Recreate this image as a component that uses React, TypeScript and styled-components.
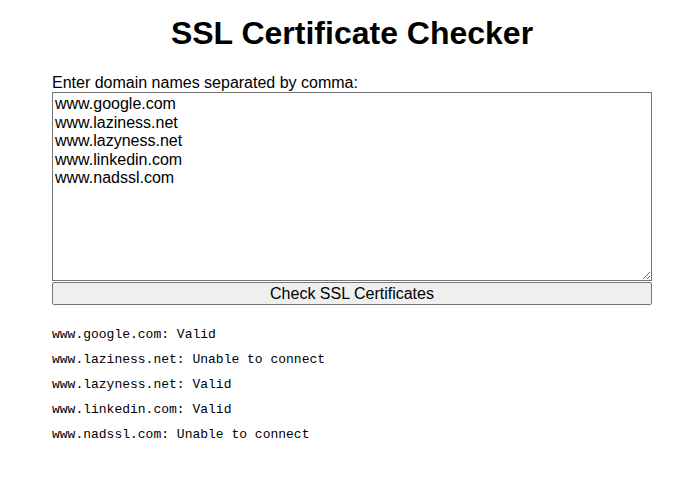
import React, {useState} from "react";
import styled, {createGlobalStyle} from "styled-components";

const GlobalStyle = createGlobalStyle`
  body {
    margin: 0;
    background: #ffffff;
    font-family: "Liberation Sans", Arial, sans-serif;
    color: #000000;
  }
`;

const Page = styled.div`
  width: 600px;
  padding: 0 0 0 52px;
`;

const Title = styled.h1`
  margin: 15px 0 0;
  font-size: 32px;
  font-weight: bold;
  text-align: center;
  line-height: 37px;
`;

const Form = styled.form`
  display: flex;
  flex-direction: column;
  margin-top: 22px;
`;

const Label = styled.label`
  font-size: 16px;
  line-height: 18px;
`;

const DomainInput = styled.textarea`
  box-sizing: border-box;
  width: 600px;
  height: 189px;
  margin: 0;
  padding: 2px;
  border: 1px solid #767676;
  font-family: "Liberation Sans", Arial, sans-serif;
  font-size: 16px;
  line-height: 18.5px;
  resize: vertical;
`;

const SubmitButton = styled.button`
  box-sizing: border-box;
  width: 600px;
  height: 23px;
  margin: 1px 0 0;
  padding: 0;
  border: 1px solid #767676;
  border-radius: 2px;
  background: #efefef;
  font-family: "Liberation Sans", Arial, sans-serif;
  font-size: 16px;
  color: #000000;
`;

const Results = styled.div`
  margin-top: 17px;
`;

const ResultLine = styled.p`
  margin: 0;
  font-family: "Liberation Mono", "Courier New", monospace;
  font-size: 13px;
  line-height: 25px;
`;

const domains = ["www.google.com", "www.laziness.net", "www.lazyness.net", "www.linkedin.com", "www.nadssl.com"];

const results = [
    {domain: "www.google.com", status: "Valid"},
    {domain: "www.laziness.net", status: "Unable to connect"},
    {domain: "www.lazyness.net", status: "Valid"},
    {domain: "www.linkedin.com", status: "Valid"},
    {domain: "www.nadssl.com", status: "Unable to connect"},
];

const App: React.FC = () => {
    const [value, setValue] = useState(domains.join("\n"));

    return (
        <Page>
            <GlobalStyle/>
            <Title>SSL Certificate Checker</Title>
            <Form onSubmit={e => e.preventDefault()}>
                <Label htmlFor="domains">Enter domain names separated by comma:</Label>
                <DomainInput id="domains" value={value} onChange={e => setValue(e.target.value)}/>
                <SubmitButton type="submit">Check SSL Certificates</SubmitButton>
            </Form>
            <Results>
                {results.map(r => <ResultLine key={r.domain}>{r.domain}: {r.status}</ResultLine>)}
            </Results>
        </Page>
    );
};

export default App;
